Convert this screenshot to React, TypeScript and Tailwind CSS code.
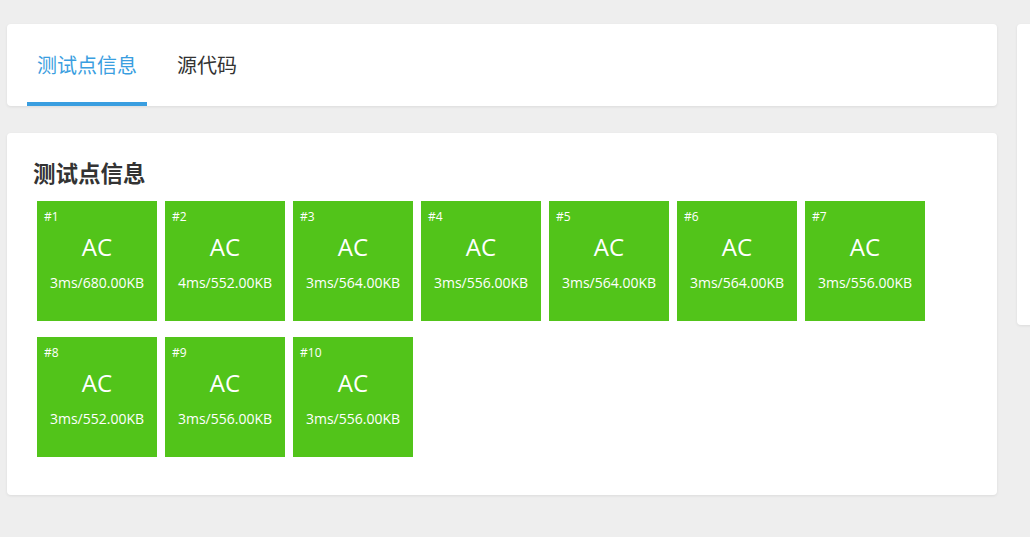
import React from "react";

const cases = [
  { id: 1, t: "3ms/680.00KB" },
  { id: 2, t: "4ms/552.00KB" },
  { id: 3, t: "3ms/564.00KB" },
  { id: 4, t: "3ms/556.00KB" },
  { id: 5, t: "3ms/564.00KB" },
  { id: 6, t: "3ms/564.00KB" },
  { id: 7, t: "3ms/556.00KB" },
  { id: 8, t: "3ms/552.00KB" },
  { id: 9, t: "3ms/556.00KB" },
  { id: 10, t: "3ms/556.00KB" },
];

export default function App() {
  return (
    <div
      className="w-[1030px] h-[537px] overflow-hidden bg-[#eeeeee] flex gap-[20px] pl-[7px] pt-[24px]"
      style={{ fontFamily: '"Open Sans", "Noto Sans CJK SC", sans-serif' }}
    >
      <div className="w-[990px] shrink-0 flex flex-col gap-[27px]">
        <div className="h-[82px] bg-white rounded-[4px] shadow-[0_1px_3px_rgba(0,0,0,0.08)] flex pl-[20px] gap-[20px]">
          <div className="h-full px-[10px] flex items-center border-b-4 border-[#3a9ee0] pt-[4px] text-[20px] text-[#3a9ee0]" style={{ fontFamily: '"Noto Sans CJK SC", sans-serif' }}>
            测试点信息
          </div>
          <div className="h-full px-[10px] flex items-center border-b-4 border-transparent pt-[4px] text-[20px] text-[#333333]" style={{ fontFamily: '"Noto Sans CJK SC", sans-serif' }}>
            源代码
          </div>
        </div>
        <div className="h-[362px] bg-white rounded-[4px] shadow-[0_1px_3px_rgba(0,0,0,0.08)] pt-[24px]">
          <div className="pl-[26px] text-[22.5px] leading-[30px] font-bold text-[#333333]" style={{ fontFamily: '"Noto Sans CJK SC", sans-serif' }}>
            测试点信息
          </div>
          <div className="pl-[30px] pt-[14px] flex flex-wrap w-[930px] gap-x-[8px] gap-y-[16px]">
            {cases.map((c) => (
              <div key={c.id} className="w-[120px] h-[120px] bg-[#52c41a] text-white flex flex-col px-[7px] pt-[8px]">
                <div className="text-[12px] leading-[16px] font-medium">#{c.id}</div>
                <div className="text-center text-[24px] leading-[32px] mt-[6px]">AC</div>
                <div className="text-center text-[14px] leading-[20px] mt-[10px] -mx-[7px]">{c.t}</div>
              </div>
            ))}
          </div>
        </div>
      </div>
      <div className="w-[300px] h-[301px] shrink-0 bg-white rounded-[4px] shadow-[0_1px_3px_rgba(0,0,0,0.08)]" />
    </div>
  );
}
